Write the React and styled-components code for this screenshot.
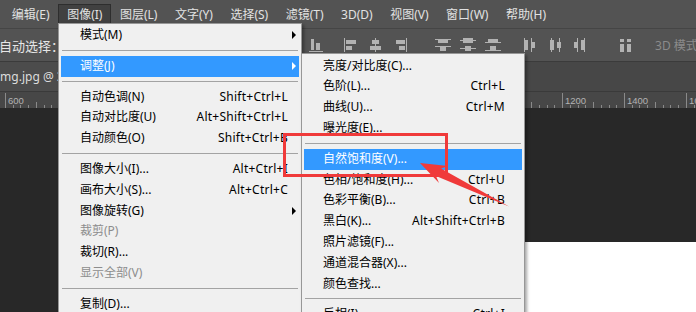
import React from "react";
import styled, { createGlobalStyle } from "styled-components";

const GlobalStyle = createGlobalStyle`
  html, body {
    margin: 0;
    padding: 0;
    background: #282828;
    overflow: hidden;
  }
  body {
    font-family: "Noto Sans", "Noto Sans CJK SC", sans-serif;
  }
`;

const Window = styled.div`
  position: relative;
  width: 696px;
  height: 312px;
  overflow: hidden;
  display: flex;
  flex-direction: column;
  background: #282828;
  font-size: 12px;
`;

const MenuBar = styled.div`
  height: 29px;
  box-sizing: border-box;
  padding: 4px 0 0 3px;
  display: flex;
  align-items: flex-start;
  background: #535353;
  border-bottom: 1px solid #454545;
`;

const MenuTitle = styled.div`
  height: 20px;
  line-height: 19px;
  padding: 0 7.75px;
  box-sizing: border-box;
  border: 1px solid ${(p) => (p.$active ? "#2e2e2e" : "transparent")};
  border-bottom: none;
  background: ${(p) => (p.$active ? "#414141" : "transparent")};
  color: #e2e2e2;
  white-space: nowrap;
`;

const OptionsBar = styled.div`
  height: 33px;
  box-sizing: border-box;
  display: flex;
  align-items: center;
  background: #535353;
  border-bottom: 1px solid #3b3b3b;
  white-space: nowrap;
`;

const OptionLabel = styled.span`
  margin-left: -1px;
  font-size: 13px;
  color: #e6e6e6;
`;

const IconGroup = styled.div`
  display: flex;
  gap: 9px;
  margin-left: ${(p) => p.$ml}px;
`;

const ToolSep = styled.div`
  width: 1px;
  height: 24px;
  background: #3f3f3f;
  margin: 0 ${(p) => p.$after}px 0 ${(p) => p.$before}px;
`;

const DisabledOption = styled.span`
  color: #8b8b8b;
  font-size: 12px;
`;

const TabBar = styled.div`
  height: 30px;
  box-sizing: border-box;
  display: flex;
  background: #474747;
  border-bottom: 1px solid #3a3a3a;
`;

const DocTab = styled.div`
  width: 240px;
  display: flex;
  align-items: center;
  background: #4c4c4c;
  color: #dcdcdc;
  font-size: 12px;
  white-space: nowrap;
  overflow: hidden;
`;

const DocName = styled.span`
  margin-left: -3px;
`;

const Ruler = styled.div`
  height: 16px;
  background: #474747;
  display: flex;
`;

const Workspace = styled.div`
  flex: 1;
  display: grid;
  grid-template-columns: 250px 1fr;
  grid-template-rows: 134px 1fr;
  background: #282828;
`;

const Canvas = styled.div`
  grid-column: 2;
  grid-row: 2;
  background: #ffffff;
`;

const Dropdown = styled.div`
  position: absolute;
  left: ${(p) => p.$left}px;
  top: ${(p) => p.$top}px;
  width: ${(p) => p.$width}px;
  box-sizing: border-box;
  padding: ${(p) => p.$padTop}px 2px 2px;
  background: #f0f0f0;
  border: 1px solid #979797;
  box-shadow: 2px 2px 3px rgba(0, 0, 0, 0.35);
`;

const Item = styled.div`
  height: 20.8px;
  display: grid;
  grid-template-columns: 1fr auto ${(p) => p.$arrowCol}px;
  align-items: center;
  padding-left: ${(p) => p.$indent}px;
  background: ${(p) => (p.$active ? "#3399ff" : "transparent")};
  color: ${(p) => (p.$active ? "#ffffff" : p.$disabled ? "#8d8d8d" : "#000000")};
  font-size: 12px;
  line-height: 20.8px;
  white-space: nowrap;
`;

const Shortcut = styled.span`
  text-align: right;
  letter-spacing: 0.25px;
`;

const SubArrow = styled.span`
  width: 0;
  height: 0;
  margin-left: 4px;
  border-left: 4px solid ${(p) => (p.$active ? "#ffffff" : "#000000")};
  border-top: 4px solid transparent;
  border-bottom: 4px solid transparent;
`;

const Separator = styled.div`
  height: 1px;
  margin: 4px 1px 5px;
  background: #a3a3a3;
`;

const CalloutBox = styled.div`
  position: absolute;
  left: 283px;
  top: 133px;
  width: 165px;
  height: 44px;
  box-sizing: border-box;
  border: 3px solid #f03a3a;
  pointer-events: none;
`;

const Overlay = styled.svg`
  position: absolute;
  left: 0;
  top: 0;
  pointer-events: none;
`;

const menuTitles = [
  "编辑(E)",
  "图像(I)",
  "图层(L)",
  "文字(Y)",
  "选择(S)",
  "滤镜(T)",
  "3D(D)",
  "视图(V)",
  "窗口(W)",
  "帮助(H)",
];

const imageMenu = [
  { label: "模式(M)", sub: true },
  "sep",
  { label: "调整(J)", sub: true, active: true },
  "sep",
  { label: "自动色调(N)", key: "Shift+Ctrl+L" },
  { label: "自动对比度(U)", key: "Alt+Shift+Ctrl+L" },
  { label: "自动颜色(O)", key: "Shift+Ctrl+B" },
  "sep",
  { label: "图像大小(I)...", key: "Alt+Ctrl+I" },
  { label: "画布大小(S)...", key: "Alt+Ctrl+C" },
  { label: "图像旋转(G)", sub: true },
  { label: "裁剪(P)", disabled: true },
  { label: "裁切(R)..." },
  { label: "显示全部(V)", disabled: true },
  "sep",
  { label: "复制(D)..." },
  { label: "应用图像(Y)..." },
];

const adjustMenu = [
  { label: "亮度/对比度(C)..." },
  { label: "色阶(L)...", key: "Ctrl+L" },
  { label: "曲线(U)...", key: "Ctrl+M" },
  { label: "曝光度(E)..." },
  "sep",
  { label: "自然饱和度(V)...", active: true },
  { label: "色相/饱和度(H)...", key: "Ctrl+U" },
  { label: "色彩平衡(B)...", key: "Ctrl+B" },
  { label: "黑白(K)...", key: "Alt+Shift+Ctrl+B" },
  { label: "照片滤镜(F)..." },
  { label: "通道混合器(X)..." },
  { label: "颜色查找..." },
  "sep",
  { label: "反相(I)", key: "Ctrl+I" },
  { label: "色调分离(P)..." },
];

const ICON = "#b2b2b2";

// move tool align / distribute glyphs, 16x16
const icons = {
  alignBottom: (
    <>
      <rect x="3" y="2" width="3" height="11" />
      <rect x="8" y="6" width="4" height="7" />
      <rect x="1" y="14" width="14" height="1" />
    </>
  ),
  alignLeft: (
    <>
      <rect x="1" y="1" width="1" height="14" />
      <rect x="3" y="3" width="10" height="4" />
      <rect x="3" y="9" width="6" height="4" />
    </>
  ),
  alignHCenter: (
    <>
      <rect x="7" y="1" width="1" height="14" />
      <rect x="4" y="3" width="7" height="4" />
      <rect x="2" y="9" width="11" height="4" />
    </>
  ),
  alignRight: (
    <>
      <rect x="13" y="1" width="1" height="14" />
      <rect x="3" y="3" width="9" height="4" />
      <rect x="6" y="9" width="6" height="4" />
    </>
  ),
  distTop: (
    <>
      <rect x="0" y="2" width="16" height="1" />
      <rect x="3" y="3" width="10" height="3" />
      <rect x="0" y="9" width="16" height="1" />
      <rect x="5" y="10" width="6" height="4" />
    </>
  ),
  distVCenter: (
    <>
      <rect x="3" y="1" width="10" height="5" />
      <rect x="0" y="3" width="16" height="1" />
      <rect x="5" y="9" width="6" height="5" />
      <rect x="0" y="11" width="16" height="1" />
    </>
  ),
  distBottom: (
    <>
      <rect x="3" y="2" width="10" height="3" />
      <rect x="0" y="5" width="16" height="1" />
      <rect x="5" y="9" width="6" height="4" />
      <rect x="0" y="13" width="16" height="1" />
    </>
  ),
  distLeft: (
    <>
      <rect x="1" y="1" width="1" height="14" />
      <rect x="2" y="3" width="3" height="10" />
      <rect x="8" y="1" width="1" height="14" />
      <rect x="9" y="5" width="3" height="6" />
    </>
  ),
  distHCenter: (
    <>
      <rect x="2" y="3" width="4" height="10" />
      <rect x="3" y="1" width="1" height="14" />
      <rect x="9" y="5" width="4" height="6" />
      <rect x="11" y="1" width="1" height="14" />
    </>
  ),
  distRight: (
    <>
      <rect x="1" y="5" width="3" height="6" />
      <rect x="4" y="1" width="1" height="14" />
      <rect x="8" y="3" width="3" height="10" />
      <rect x="11" y="1" width="1" height="14" />
    </>
  ),
  autoAlign: (
    <>
      <rect x="2" y="2" width="4" height="3" />
      <rect x="2" y="7" width="4" height="8" />
      <rect x="9" y="2" width="4" height="3" />
      <rect x="9" y="7" width="4" height="8" />
    </>
  ),
};

function ToolIcon({ name }) {
  return (
    <svg width="16" height="16" viewBox="0 0 16 16" fill={ICON}>
      {icons[name]}
    </svg>
  );
}

function Menu({ items, left, top, width, padTop, indent, arrowCol }) {
  return (
    <Dropdown $left={left} $top={top} $width={width} $padTop={padTop}>
      {items.map((it, i) =>
        it === "sep" ? (
          <Separator key={i} />
        ) : (
          <Item
            key={i}
            $active={it.active}
            $disabled={it.disabled}
            $indent={indent}
            $arrowCol={arrowCol}
          >
            <span>{it.label}</span>
            <Shortcut>{it.key || ""}</Shortcut>
            {it.sub ? <SubArrow $active={it.active} /> : <span />}
          </Item>
        )
      )}
    </Dropdown>
  );
}

function RulerTicks() {
  const start = 5;
  const step = 61.9;
  const ticks = [];
  for (let m = 0; m <= 11; m++) {
    const x0 = start + m * step;
    ticks.push(<rect key={"M" + m} x={Math.round(x0)} y="1" width="1" height="15" />);
    for (let s = 1; s < 8; s++) {
      const x = Math.round(x0 + (s * step) / 8);
      const h = s === 4 ? 6 : 3;
      ticks.push(<rect key={m + "-" + s} x={x} y={16 - h} width="1" height={h} />);
    }
  }
  const labels = [
    { x: 5, t: "600" },
    { x: 562, t: "1200" },
    { x: 624, t: "1400" },
    { x: 686, t: "1600" },
  ];
  return (
    <svg width="696" height="16">
      <g fill="#8a8a8a">{ticks}</g>
      {labels.map((l) => (
        <text
          key={l.t}
          x={l.x + 3}
          y="12"
          fill="#b3b3b3"
          fontSize="9.5"
          fontFamily="Liberation Sans, sans-serif"
        >
          {l.t}
        </text>
      ))}
    </svg>
  );
}

export default function App() {
  return (
    <>
      <GlobalStyle />
      <Window>
        <MenuBar>
          {menuTitles.map((t) => (
            <MenuTitle key={t} $active={t === "图像(I)"}>
              {t}
            </MenuTitle>
          ))}
        </MenuBar>

        <OptionsBar>
          <OptionLabel>自动选择：</OptionLabel>
          <IconGroup $ml={244}>
            <ToolIcon name="alignBottom" />
          </IconGroup>
          <IconGroup $ml={19}>
            <ToolIcon name="alignLeft" />
            <ToolIcon name="alignHCenter" />
            <ToolIcon name="alignRight" />
          </IconGroup>
          <ToolSep $before={14} $after={12} />
          <IconGroup $ml={0}>
            <ToolIcon name="distTop" />
            <ToolIcon name="distVCenter" />
            <ToolIcon name="distBottom" />
          </IconGroup>
          <IconGroup $ml={22}>
            <ToolIcon name="distLeft" />
            <ToolIcon name="distHCenter" />
            <ToolIcon name="distRight" />
          </IconGroup>
          <ToolSep $before={15} $after={14} />
          <IconGroup $ml={0}>
            <ToolIcon name="autoAlign" />
          </IconGroup>
          <ToolSep $before={13} $after={8} />
          <DisabledOption>3D 模式：</DisabledOption>
        </OptionsBar>

        <TabBar>
          <DocTab>
            <DocName>img.jpg @ 33.3%(RGB/8#)</DocName>
          </DocTab>
        </TabBar>

        <Ruler>
          <RulerTicks />
        </Ruler>

        <Workspace>
          <Canvas />
        </Workspace>

        <Menu
          items={imageMenu}
          left={58}
          top={23}
          width={244}
          padTop={1}
          indent={19}
          arrowCol={11}
        />
        <Menu
          items={adjustMenu}
          left={301}
          top={53}
          width={224}
          padTop={1.6}
          indent={19}
          arrowCol={17}
        />

        <CalloutBox />
        <Overlay width="696" height="312">
          <polygon
            fill="#f03a3a"
            points="420,163 448,166 441,168.5 509,206.5 436,176 439,183"
          />
        </Overlay>
      </Window>
    </>
  );
}
